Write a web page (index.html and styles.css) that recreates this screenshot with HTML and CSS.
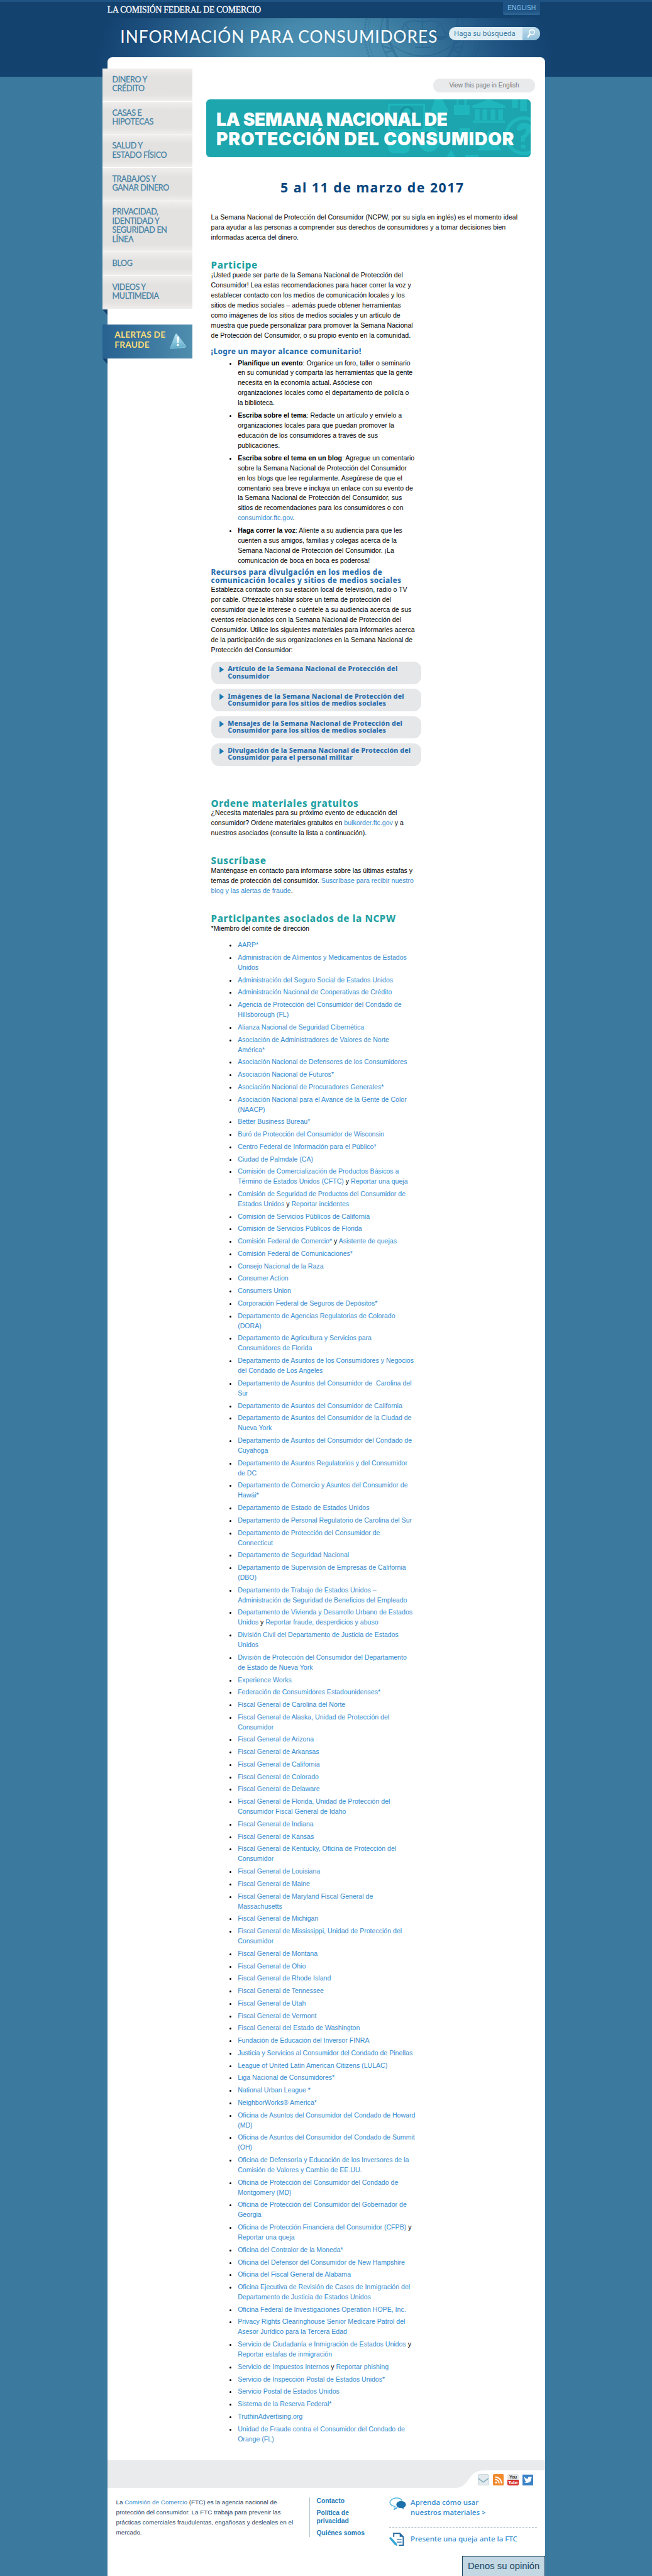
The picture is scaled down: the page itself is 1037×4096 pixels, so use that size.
FILE: index.html
```html
<!DOCTYPE html>
<html lang="es">
<head>
<meta charset="utf-8">
<title>La Semana Nacional de Protección del Consumidor</title>
<link rel="stylesheet" href="styles.css">
</head>
<body>
<header class="site-header">
  <div class="top-bar">
    <a class="agency">LA COMISIÓN FEDERAL DE COMERCIO</a>
    <a class="lang">ENGLISH</a>
  </div>
  <div class="masthead">
    <svg class="seal" width="25rem" height="8.2rem" viewBox="0 0 250 82" fill="none" stroke="#1d5485">
      <circle cx="125" cy="32" r="121" stroke-width="4" stroke-dasharray="3 3"/>
      <circle cx="125" cy="32" r="114"/>
      <circle cx="125" cy="32" r="88" stroke-width="2"/>
      <path d="M52 0C50 34 58 62 72 82M198 0C200 34 192 62 178 82" stroke-width="5"/>
      <path d="M45 44l14 12M41 58l18 6M47 72l20-6M205 44l-14 12M209 58l-18 6M203 72l-20-6" stroke-width="3"/>
      <path d="M88 10Q106 2 125 8Q144 2 162 10M125 0V60M88 10L75 38H104L88 10M162 10L148 38H177L162 10M110 61H142M62 56Q125 102 188 56" stroke-width="2"/>
      <path d="M75 38Q90 54 104 38M148 38Q163 54 177 38" fill="#1d5485"/>
    </svg>
    <h1 class="site-name">INFORMACIÓN PARA CONSUMIDORES</h1>
    <div class="search">
      <span class="search-field">Haga su búsqueda</span>
      <span class="search-button"><svg width="1.8rem" height="1.9rem" viewBox="0 0 18 19" fill="none" stroke="#fff"><circle cx="10.5" cy="7" r="5.3" stroke-width="2.2"/><path d="M6.5 11L2.5 16.5" stroke-width="3.4" stroke-linecap="round"/></svg></span>
    </div>
  </div>
</header>

<div class="panel">
  <div class="columns">
    <nav class="side">
      <a class="side-item">DINERO Y<br>CRÉDITO</a>
      <a class="side-item">CASAS E<br>HIPOTECAS</a>
      <a class="side-item">SALUD Y<br>ESTADO FÍSICO</a>
      <a class="side-item">TRABAJOS Y<br>GANAR DINERO</a>
      <a class="side-item">PRIVACIDAD,<br>IDENTIDAD Y<br>SEGURIDAD EN<br>LÍNEA</a>
      <a class="side-item">BLOG</a>
      <a class="side-item">VIDEOS Y<br>MULTIMEDIA</a>
      <span class="fold"></span>
      <a class="alert">
        <span class="alert-text">ALERTAS DE<br>FRAUDE</span>
        <svg class="alert-icon" width="3.6rem" height="3.4rem" viewBox="0 0 36 34"><defs><linearGradient id="tri" x1="0" y1="0" x2="0" y2="1"><stop offset="0" stop-color="#b9e3ee"/><stop offset="1" stop-color="#5fabca"/></linearGradient></defs><path d="M15 2L34 27Q34 29 32 29.500L3 32Q1 32 1.500 30L12 2Q13.500 0 15 2Z" fill="url(#tri)" stroke="#9ad4e6"/><path d="M15 7L20 7L18.500 20H15.500Z" fill="#fff"/><circle cx="17" cy="24.500" r="2.300" fill="#fff"/></svg>
      </a>
      <span class="fold"></span>
    </nav>
    <main class="main">
      <a class="view-en">View this page in English</a>
      <div class="banner">
        <svg class="banner-art" width="30rem" height="12.1rem" viewBox="0 0 300 121" fill="#22bfc4">
          <path d="M0 9H78V67H0ZM4 13V63H74V13Z" fill-rule="evenodd"/><circle cx="40" cy="30" r="16" fill="#178f9a"/><circle cx="40" cy="26" r="8"/><path d="M28 45Q40 28 52 45Z"/>
          <path d="M98 0H114L127 24L120 28L122 44H92L94 27L90 25Z"/>
          <path d="M138 12H171V33H138ZM144 0H148V12H144ZM160 0H165V12H160Z"/>
          <path d="M177 13L211 0L246 13V18H177ZM182 21H192V43H182ZM198 21H208V43H198ZM215 21H225V43H215ZM231 21H241V43H231ZM178 44H245V49H178Z"/>
          <path d="M260 0H272V18H260ZM277 0H291V25H277Z"/>
          <circle cx="285" cy="76" r="37" fill="none" stroke="#22bfc4" stroke-width="7"/><path d="M270 65Q271 48 288 49Q304 52 299 68Q292 78 287 82V89H279V77Q290 70 289 63Q286 58 278 66ZM279 95H288V103H279Z"/>
          <ellipse cx="86" cy="83" rx="24" ry="27"/><path d="M68 72L84 67L92 78L85 93L75 87Z" fill="#178f9a"/>
          <rect x="0" y="66" width="46" height="47" rx="13"/><path d="M188 107L212 64L238 107ZM150 60H172V88H150ZM123 121L132 106L141 121ZM162 116H190V121H162Z"/>
        </svg>
        <h2 class="banner-title"><span class="line-a">LA SEMANA NACIONAL DE</span><br><span class="line-b">PROTECCIÓN DEL CONSUMIDOR</span></h2>
      </div>
      <p class="date">5 al 11 de marzo de 2017</p>
      <div class="copy">
        <p class="intro">La Semana Nacional de Protección del Consumidor (NCPW, por su sigla en inglés) es el momento ideal<br>para ayudar a las personas a comprender sus derechos de consumidores y a tomar decisiones bien<br>informadas acerca del dinero.</p>
        <h3 class="title">Participe</h3>
        <p>¡Usted puede ser parte de la Semana Nacional de Protección del<br>Consumidor! Lea estas recomendaciones para hacer correr la voz y<br>establecer contacto con los medios de comunicación locales y los<br>sitios de medios sociales – además puede obtener herramientas<br>como imágenes de los sitios de medios sociales y un artículo de<br>muestra que puede personalizar para promover la Semana Nacional<br>de Protección del Consumidor, o su propio evento en la comunidad.</p>
        <h4 class="subtitle reach">¡Logre un mayor alcance comunitario!</h4>
        <ul class="list">
          <li><b>Planifique un evento</b>: Organice un foro, taller o seminario<br>en su comunidad y comparta las herramientas que la gente<br>necesita en la economía actual. Asóciese con<br>organizaciones locales como el departamento de policía o<br>la biblioteca.</li>
          <li><b>Escriba sobre el tema</b>: Redacte un artículo y envíelo a<br>organizaciones locales para que puedan promover la<br>educación de los consumidores a través de sus<br>publicaciones.</li>
          <li><b>Escriba sobre el tema en un blog</b>: Agregue un comentario<br>sobre la Semana Nacional de Protección del Consumidor<br>en los blogs que lee regularmente. Asegúrese de que el<br>comentario sea breve e incluya un enlace con su evento de<br>la Semana Nacional de Protección del Consumidor, sus<br>sitios de recomendaciones para los consumidores o con<br><a>consumidor.ftc.gov</a>.</li>
          <li><b>Haga correr la voz</b>: Aliente a su audiencia para que les<br>cuenten a sus amigos, familias y colegas acerca de la<br>Semana Nacional de Protección del Consumidor. ¡La<br>comunicación de boca en boca es poderosa!</li>
        </ul>
        <h4 class="subtitle media">Recursos para divulgación en los medios de<br>comunicación locales y sitios de medios sociales</h4>
        <p>Establezca contacto con su estación local de televisión, radio o TV<br>por cable. Ofrézcales hablar sobre un tema de protección del<br>consumidor que le interese o cuéntele a su audiencia acerca de sus<br>eventos relacionados con la Semana Nacional de Protección del<br>Consumidor. Utilice los siguientes materiales para informarles acerca<br>de la participación de sus organizaciones en la Semana Nacional de<br>Protección del Consumidor:</p>
        <div class="pills">
          <a class="pill"><i class="arrow"></i><span>Artículo de la Semana Nacional de Protección del<br>Consumidor</span></a>
          <a class="pill"><i class="arrow"></i><span>Imágenes de la Semana Nacional de Protección del<br>Consumidor para los sitios de medios sociales</span></a>
          <a class="pill"><i class="arrow"></i><span>Mensajes de la Semana Nacional de Protección del<br>Consumidor para los sitios de medios sociales</span></a>
          <a class="pill"><i class="arrow"></i><span>Divulgación de la Semana Nacional de Protección del<br>Consumidor para el personal militar</span></a>
        </div>
        <h3 class="title order">Ordene materiales gratuitos</h3>
        <p>¿Necesita materiales para su próximo evento de educación del<br>consumidor? Ordene materiales gratuitos en <a>bulkorder.ftc.gov</a> y a<br>nuestros asociados (consulte la lista a continuación).</p>
        <h3 class="title">Suscríbase</h3>
        <p>Manténgase en contacto para informarse sobre las últimas estafas y<br>temas de protección del consumidor. <a>Suscríbase para recibir nuestro<br>blog y las alertas de fraude</a>.</p>
        <h3 class="title">Participantes asociados de la NCPW</h3>
        <p>*Miembro del comité de dirección</p>
        <ul class="list partners">
          <li><a>AARP*</a></li>
          <li><a>Administración de Alimentos y Medicamentos de Estados<br>Unidos</a></li>
          <li><a>Administración del Seguro Social de Estados Unidos</a></li>
          <li><a>Administración Nacional de Cooperativas de Crédito</a></li>
          <li><a>Agencia de Protección del Consumidor del Condado de<br>Hillsborough (FL)</a></li>
          <li><a>Alianza Nacional de Seguridad Cibernética</a></li>
          <li><a>Asociación de Administradores de Valores de Norte<br>América*</a></li>
          <li><a>Asociación Nacional de Defensores de los Consumidores</a></li>
          <li><a>Asociación Nacional de Futuros*</a></li>
          <li><a>Asociación Nacional de Procuradores Generales*</a></li>
          <li><a>Asociación Nacional para el Avance de la Gente de Color<br>(NAACP)</a></li>
          <li><a>Better Business Bureau*</a></li>
          <li><a>Buró de Protección del Consumidor de Wisconsin</a></li>
          <li><a>Centro Federal de Información para el Público*</a></li>
          <li><a>Ciudad de Palmdale (CA)</a></li>
          <li><a>Comisión de Comercialización de Productos Básicos a<br>Término de Estados Unidos (CFTC)</a> y <a>Reportar una queja</a></li>
          <li><a>Comisión de Seguridad de Productos del Consumidor de<br>Estados Unidos</a> y <a>Reportar incidentes</a></li>
          <li><a>Comisión de Servicios Públicos de California</a></li>
          <li><a>Comisión de Servicios Públicos de Florida</a></li>
          <li><a>Comisión Federal de Comercio*</a> y <a>Asistente de quejas</a></li>
          <li><a>Comisión Federal de Comunicaciones*</a></li>
          <li><a>Consejo Nacional de la Raza</a></li>
          <li><a>Consumer Action</a></li>
          <li><a>Consumers Union</a></li>
          <li><a>Corporación Federal de Seguros de Depósitos*</a></li>
          <li><a>Departamento de Agencias Regulatorias de Colorado<br>(DORA)</a></li>
          <li><a>Departamento de Agricultura y Servicios para<br>Consumidores de Florida</a></li>
          <li><a>Departamento de Asuntos de los Consumidores y Negocios<br>del Condado de Los Angeles</a></li>
          <li><a>Departamento de Asuntos del Consumidor de&nbsp; Carolina del<br>Sur</a></li>
          <li><a>Departamento de Asuntos del Consumidor de California</a></li>
          <li><a>Departamento de Asuntos del Consumidor de la Ciudad de<br>Nueva York</a></li>
          <li><a>Departamento de Asuntos del Consumidor del Condado de<br>Cuyahoga</a></li>
          <li><a>Departamento de Asuntos Regulatorios y del Consumidor<br>de DC</a></li>
          <li><a>Departamento de Comercio y Asuntos del Consumidor de<br>Hawái*</a></li>
          <li><a>Departamento de Estado de Estados Unidos</a></li>
          <li><a>Departamento de Personal Regulatorio de Carolina del Sur</a></li>
          <li><a>Departamento de Protección del Consumidor de<br>Connecticut</a></li>
          <li><a>Departamento de Seguridad Nacional</a></li>
          <li><a>Departamento de Supervisión de Empresas de California<br>(DBO)</a></li>
          <li><a>Departamento de Trabajo de Estados Unidos –<br>Administración de Seguridad de Beneficios del Empleado</a></li>
          <li><a>Departamento de Vivienda y Desarrollo Urbano de Estados<br>Unidos</a> y <a>Reportar fraude, desperdicios y abuso</a></li>
          <li><a>División Civil del Departamento de Justicia de Estados<br>Unidos</a></li>
          <li><a>División de Protección del Consumidor del Departamento<br>de Estado de Nueva York</a></li>
          <li><a>Experience Works</a></li>
          <li><a>Federación de Consumidores Estadounidenses*</a></li>
          <li><a>Fiscal General de Carolina del Norte</a></li>
          <li><a>Fiscal General de Alaska, Unidad de Protección del<br>Consumidor</a></li>
          <li><a>Fiscal General de Arizona</a></li>
          <li><a>Fiscal General de Arkansas</a></li>
          <li><a>Fiscal General de California</a></li>
          <li><a>Fiscal General de Colorado</a></li>
          <li><a>Fiscal General de Delaware</a></li>
          <li><a>Fiscal General de Florida, Unidad de Protección del<br>Consumidor Fiscal General de Idaho</a></li>
          <li><a>Fiscal General de Indiana</a></li>
          <li><a>Fiscal General de Kansas</a></li>
          <li><a>Fiscal General de Kentucky, Oficina de Protección del<br>Consumidor</a></li>
          <li><a>Fiscal General de Louisiana</a></li>
          <li><a>Fiscal General de Maine</a></li>
          <li><a>Fiscal General de Maryland Fiscal General de<br>Massachusetts</a></li>
          <li><a>Fiscal General de Michigan</a></li>
          <li><a>Fiscal General de Mississippi, Unidad de Protección del<br>Consumidor</a></li>
          <li><a>Fiscal General de Montana</a></li>
          <li><a>Fiscal General de Ohio</a></li>
          <li><a>Fiscal General de Rhode Island</a></li>
          <li><a>Fiscal General de Tennessee</a></li>
          <li><a>Fiscal General de Utah</a></li>
          <li><a>Fiscal General de Vermont</a></li>
          <li><a>Fiscal General del Estado de Washington</a></li>
          <li><a>Fundación de Educación del Inversor FINRA</a></li>
          <li><a>Justicia y Servicios al Consumidor del Condado de Pinellas</a></li>
          <li><a>League of United Latin American Citizens (LULAC)</a></li>
          <li><a>Liga Nacional de Consumidores*</a></li>
          <li><a>National Urban League *</a></li>
          <li><a>NeighborWorks® America*</a></li>
          <li><a>Oficina de Asuntos del Consumidor del Condado de Howard<br>(MD)</a></li>
          <li><a>Oficina de Asuntos del Consumidor del Condado de Summit<br>(OH)</a></li>
          <li><a>Oficina de Defensoría y Educación de los Inversores de la<br>Comisión de Valores y Cambio de EE.UU.</a></li>
          <li><a>Oficina de Protección del Consumidor del Condado de<br>Montgomery (MD)</a></li>
          <li><a>Oficina de Protección del Consumidor del Gobernador de<br>Georgia</a></li>
          <li><a>Oficina de Protección Financiera del Consumidor (CFPB)</a> y<br><a>Reportar una queja</a></li>
          <li><a>Oficina del Contralor de la Moneda*</a></li>
          <li><a>Oficina del Defensor del Consumidor de New Hampshire</a></li>
          <li><a>Oficina del Fiscal General de Alabama</a></li>
          <li><a>Oficina Ejecutiva de Revisión de Casos de Inmigración del<br>Departamento de Justicia de Estados Unidos</a></li>
          <li><a>Oficina Federal de Investigaciones Operation HOPE, Inc.</a></li>
          <li><a>Privacy Rights Clearinghouse Senior Medicare Patrol del<br>Asesor Jurídico para la Tercera Edad</a></li>
          <li><a>Servicio de Ciudadanía e Inmigración de Estados Unidos</a> y<br><a>Reportar estafas de inmigración</a></li>
          <li><a>Servicio de Impuestos Internos</a> y <a>Reportar phishing</a></li>
          <li><a>Servicio de Inspección Postal de Estados Unidos*</a></li>
          <li><a>Servicio Postal de Estados Unidos</a></li>
          <li><a>Sistema de la Reserva Federal*</a></li>
          <li><a>TruthinAdvertising.org</a></li>
          <li><a>Unidad de Fraude contra el Consumidor del Condado de<br>Orange (FL)</a></li>
        </ul>
      </div>
    </main>
  </div>

  <footer class="footer">
    <div class="social-bar">
      <svg class="tab" width="19rem" height="5.8rem" viewBox="0 0 190 58"><path d="M0 58C34 58 24 21 62 21H190V58Z" fill="#fff"/></svg>
      <div class="social">
        <svg width="2.3rem" height="2.4rem" viewBox="0 0 23 24"><rect x=".5" y=".5" width="22" height="23" rx="2.500" fill="#e2eaed" stroke="#bcc8cd"/><path d="M1 9L11.500 17L22 9" fill="none" stroke="#7faab9" stroke-width="2"/></svg>
        <svg width="2.3rem" height="2.4rem" viewBox="0 0 23 24"><rect width="23" height="24" rx="3" fill="#f28a2d"/><circle cx="6.500" cy="17.500" r="2" fill="#fff"/><path d="M4.500 11A8.500 8.500 0 0 1 13 19.500M4.500 6A13.500 13.500 0 0 1 18 19.500" fill="none" stroke="#fff" stroke-width="2.400"/></svg>
        <span class="youtube"><span class="you">You</span><span class="tube">Tube</span></span>
        <svg width="2.3rem" height="2.4rem" viewBox="0 0 23 24"><rect y="1" width="23" height="23" fill="#3c82c6"/><path d="M4 6Q7 10 11.500 10Q11 5.500 15 5.500Q16.500 5.500 17.500 6.500L20 6L18.500 9Q18.500 18 10 18.500Q6 18.500 3.500 17Q6.500 17 8 15.500Q5.500 15 5 13L6.500 13Q4 11.500 4 9L5 9.500Q3 8 4 6Z" fill="#fff"/></svg>
      </div>
    </div>
    <div class="footer-cols">
      <p class="about">La <a>Comisión de Comercio</a> (FTC) es la agencia nacional de<br>protección del consumidor. La FTC trabaja para prevenir las<br>prácticas comerciales fraudulentas, engañosas y desleales en el<br>mercado.</p>
      <div class="footer-links"><a>Contacto</a><a>Política de<br>privacidad</a><a>Quiénes somos</a></div>
      <div class="actions">
        <a class="action learn">
          <svg width="3.6rem" height="2.7rem" viewBox="0 0 36 27"><path d="M27 7C24 1 15 0 9 2.500C1 6 -1 12 5 16.500Q9 19 12 18.500Q13 21 11 25Q15 24 17 20" fill="none" stroke="#3cabdc" stroke-width="1.800"/><ellipse cx="25" cy="15" rx="10" ry="7.500" fill="#1d71ab"/><path d="M25 20Q29 25 31 25Q29 22 30 19Z" fill="#1d71ab"/></svg>
          <span>Aprenda cómo usar<br>nuestros materiales &gt;</span>
        </a>
        <a class="action complain">
          <svg width="3.6rem" height="2.9rem" viewBox="0 0 36 29" fill="none"><path d="M9.500 9V1.500H22L29.500 9V26.500H20" stroke="#2468a0" stroke-width="2.600"/><path d="M22 0V9H31" fill="#2468a0"/><path d="M16 15H26M16 20H26" stroke="#2468a0" stroke-width="1.800"/><path d="M0 12Q2 8 5 11L16 23L17 28L12 26Z" fill="#35a5d8"/></svg>
          <span>Presente una queja ante la FTC</span>
        </a>
      </div>
    </div>
    <a class="feedback">Denos su opinión</a>
  </footer>
</div>
</body>
</html>
```
FILE: styles.css
```css
/* 1rem is ten layout units; the whole page scales from here */
html {
  font-size: 7.5936px;
  background: #3c799f;
}

body {
  margin: 0;
  height: 539.4rem;
  overflow: hidden;
  font-family: "Liberation Sans", Arial, sans-serif;
  font-size: 1.395rem;
  line-height: 2.1rem;
  color: #000;
  white-space: nowrap;
  background: linear-gradient(#13426f 16.1rem, #3c799f 16.1rem);
}

h1, h2, h3, h4, p, ul { margin: 0; padding: 0; }
a { color: #348bcf; }
svg { flex: none; }

/* Header */
.site-header { height: 12rem; background: #13426f; }

.top-bar {
  box-sizing: border-box;
  height: 3.8rem;
  padding: 0 23.4rem 0 22.5rem;
  border-top: 0.5rem solid #1f5384;
  display: flex;
  justify-content: space-between;
  align-items: flex-start;
}

.agency {
  margin-top: 0.7rem;
  color: #fff;
  font: 1.8rem/2.2rem "Liberation Serif", serif;
  -webkit-text-stroke: 0.04rem #fff;
  letter-spacing: -0.025rem;
}

.lang {
  width: 7.8rem;
  height: 2.7rem;
  border-radius: 0 0 0.4rem 0.4rem;
  background: linear-gradient(#1f5384 70%, #2f6797);
  color: #85c2ea;
  font-size: 1.35rem;
  line-height: 2.6rem;
  text-align: center;
}

.masthead {
  position: relative;
  height: 8.2rem;
  padding: 0 23.5rem 4.1rem 25.2rem;
  display: flex;
  justify-content: space-between;
  background: radial-gradient(ellipse 48rem 33rem at 68rem 11rem, #5297b9 0, #4689ac 32%, #2e6992 58%, #1e5180 80%, #13426f 100%);
}

.seal { position: absolute; left: 76rem; top: 0; opacity: 0.35; }

.site-name {
  position: relative;
  margin-top: 1.9rem;
  color: #fff;
  font: 400 3.45rem/4.2rem Lato, sans-serif;
  letter-spacing: 0.135rem;
}

.search {
  margin-top: 1.8rem;
  position: relative;
  width: 19.1rem;
  height: 2.8rem;
  border-radius: 1.4rem;
  overflow: hidden;
  display: flex;
  background: #dfedf4;
}

.search-field {
  flex: 1;
  padding-left: 1.1rem;
  color: #3b7ba1;
  font: 1.47rem/2.7rem "Noto Sans", sans-serif;
}

.search-button {
  width: 3.6rem;
  display: flex;
  align-items: center;
  justify-content: center;
  background: linear-gradient(#c2deec, #8fbfda);
}

/* White page panel */
.panel {
  position: relative;
  width: 91.7rem;
  height: 527.4rem;
  margin-left: 22.5rem;
  border-radius: 1rem 1rem 0 0;
  background: #fff;
}

.columns { display: flex; height: 503.2rem; }

.side {
  width: 18.8rem;
  margin: 2.4rem 2.9rem 0 -1rem;
  display: flex;
  flex-direction: column;
}

.side-item {
  padding: 1.4rem 0 1.6rem 2rem;
  border-bottom: 1px solid #fff;
  background: linear-gradient(#efeeed, #e3e2e1 1.8rem, #e3e2e1 calc(100% - 1.4rem), #efeeed);
  color: #4682a5;
  font: 400 1.65rem/1.9rem Lato, sans-serif;
  -webkit-text-stroke: 0.035rem #4682a5;
  letter-spacing: -0.04rem;
}

.fold {
  width: 1rem;
  height: 1.2rem;
  background: #13426f;
  clip-path: polygon(0 0, 100% 0, 100% 100%);
}

.alert {
  height: 7.2rem;
  margin-top: 1.9rem;
  padding-left: 2.5rem;
  display: flex;
  align-items: center;
  background: linear-gradient(90deg, #276191, #508eae);
}

.alert-text {
  width: 11.6rem;
  margin-bottom: 0.4rem;
  color: #fbdc79;
  font: 700 1.8rem/2.1rem Lato, sans-serif;
  letter-spacing: 0.03rem;
}

/* Main column */
.main {
  padding-top: 4.4rem;
  display: flex;
  flex-direction: column;
}

.view-en {
  align-self: flex-end;
  width: 21.4rem;
  margin: 0 -0.9rem 1.5rem 0;
  border-radius: 1.4rem;
  background: #e9eaec;
  color: #7b7b7d;
  font-size: 1.32rem;
  line-height: 2.9rem;
  text-align: center;
}

.banner {
  position: relative;
  box-sizing: border-box;
  width: 68rem;
  height: 12.1rem;
  padding: 2.3rem 0 0 2.1rem;
  border-radius: 0.8rem;
  overflow: hidden;
  background: #1da6ae;
}

.banner-art { position: absolute; right: 0; top: 0; opacity: 0.7; }

.banner-title {
  position: relative;
  color: #fff;
  font: 900 3.7rem/4rem Inter, sans-serif;
}

.line-a { letter-spacing: -0.045rem; }
.line-b { letter-spacing: 0.12rem; }

.date {
  margin: 4.9rem 0 3.75rem;
  padding-left: 1.6rem;
  color: #06457e;
  font: 700 2.8rem/3rem "Noto Sans", sans-serif;
  letter-spacing: 0.2rem;
  text-align: center;
}

.copy { padding-left: 1rem; width: 44rem; }

.title {
  margin-top: 3.4rem;
  color: #23a2a4;
  font: 800 2rem/2.4rem "Noto Sans", sans-serif;
  letter-spacing: 0.08rem;
}

.title.order { margin: 6.6rem 0 -0.1rem; }

.subtitle {
  color: #2a6fae;
  font: 800 1.55rem/1.7rem "Noto Sans", sans-serif;
  letter-spacing: 0.045rem;
}

.reach { margin: 1.25rem 0 0.4rem; line-height: 2rem; letter-spacing: 0.05rem; }
.media { margin: 0.4rem 0 0.15rem; }

.list { padding-left: 5.6rem; }
.list li + li { margin-top: 0.5rem; }
.partners { margin-top: 1.35rem; }
.partners li + li { margin-top: 0.502rem; }

.pills {
  margin-top: 1.4rem;
  display: flex;
  flex-direction: column;
  gap: 1rem;
}

.pill {
  box-sizing: border-box;
  height: 4.7rem;
  padding: 0.8rem 0 0 1.8rem;
  display: flex;
  gap: 0.8rem;
  border-radius: 1.6rem;
  background: #e6e7e9;
  color: #2a6fae;
  font: 800 1.4rem/1.5rem "Noto Sans", sans-serif;
  letter-spacing: 0.02rem;
}

.arrow {
  width: 0.9rem;
  height: 1.3rem;
  margin-top: 0.2rem;
  background: #1878b4;
  clip-path: polygon(0 0, 100% 50%, 0 100%);
}

/* Footer */
.social-bar {
  position: relative;
  height: 5.8rem;
  display: flex;
  justify-content: flex-end;
  background: #e9ebec;
}

.tab { position: absolute; right: 0; top: 0; }

.social {
  position: relative;
  display: flex;
  gap: 0.8rem;
  padding: 2.9rem 2.5rem 0 0;
}

.youtube {
  width: 2.3rem;
  height: 2.4rem;
  border-radius: 0.3rem;
  overflow: hidden;
  background: #e5e5e5;
  font: 700 0.95rem/1.2rem "Liberation Sans", sans-serif;
  letter-spacing: -0.06rem;
  text-align: center;
}

.you, .tube { display: block; }
.you { color: #333; }
.tube { background: #d5302e; color: #fff; }

.footer-cols { display: flex; padding: 1.9rem 1.8rem 0; }

.about {
  width: 40.5rem;
  height: 8.4rem;
  border-right: 1px solid #b4c3cd;
  color: #1f4466;
  font-size: 1.3rem;
}

.footer-links {
  width: 15.2rem;
  padding-left: 1.4rem;
  display: flex;
  flex-direction: column;
  gap: 1rem;
  font-weight: 700;
  font-size: 1.35rem;
  line-height: 1.6rem;
}

.footer-links a { color: #1e7ab8; }

.actions { width: 30.9rem; font: 500 1.52rem/2.1rem "Noto Sans", sans-serif; }

.action { display: flex; gap: 0.9rem; }
.learn { height: 6.3rem; border-bottom: 1px dashed #a9b7c2; }
.complain { padding-top: 1rem; }
.complain span { margin-top: 0.3rem; }

.feedback {
  position: absolute;
  right: 0;
  bottom: 0;
  box-sizing: border-box;
  width: 17.4rem;
  height: 4.2rem;
  border: 0.2rem solid #1d4562;
  border-bottom: 0;
  background: #c3d8e2;
  color: #1d4562;
  font-size: 1.95rem;
  line-height: 4.2rem;
  text-align: center;
}
```
